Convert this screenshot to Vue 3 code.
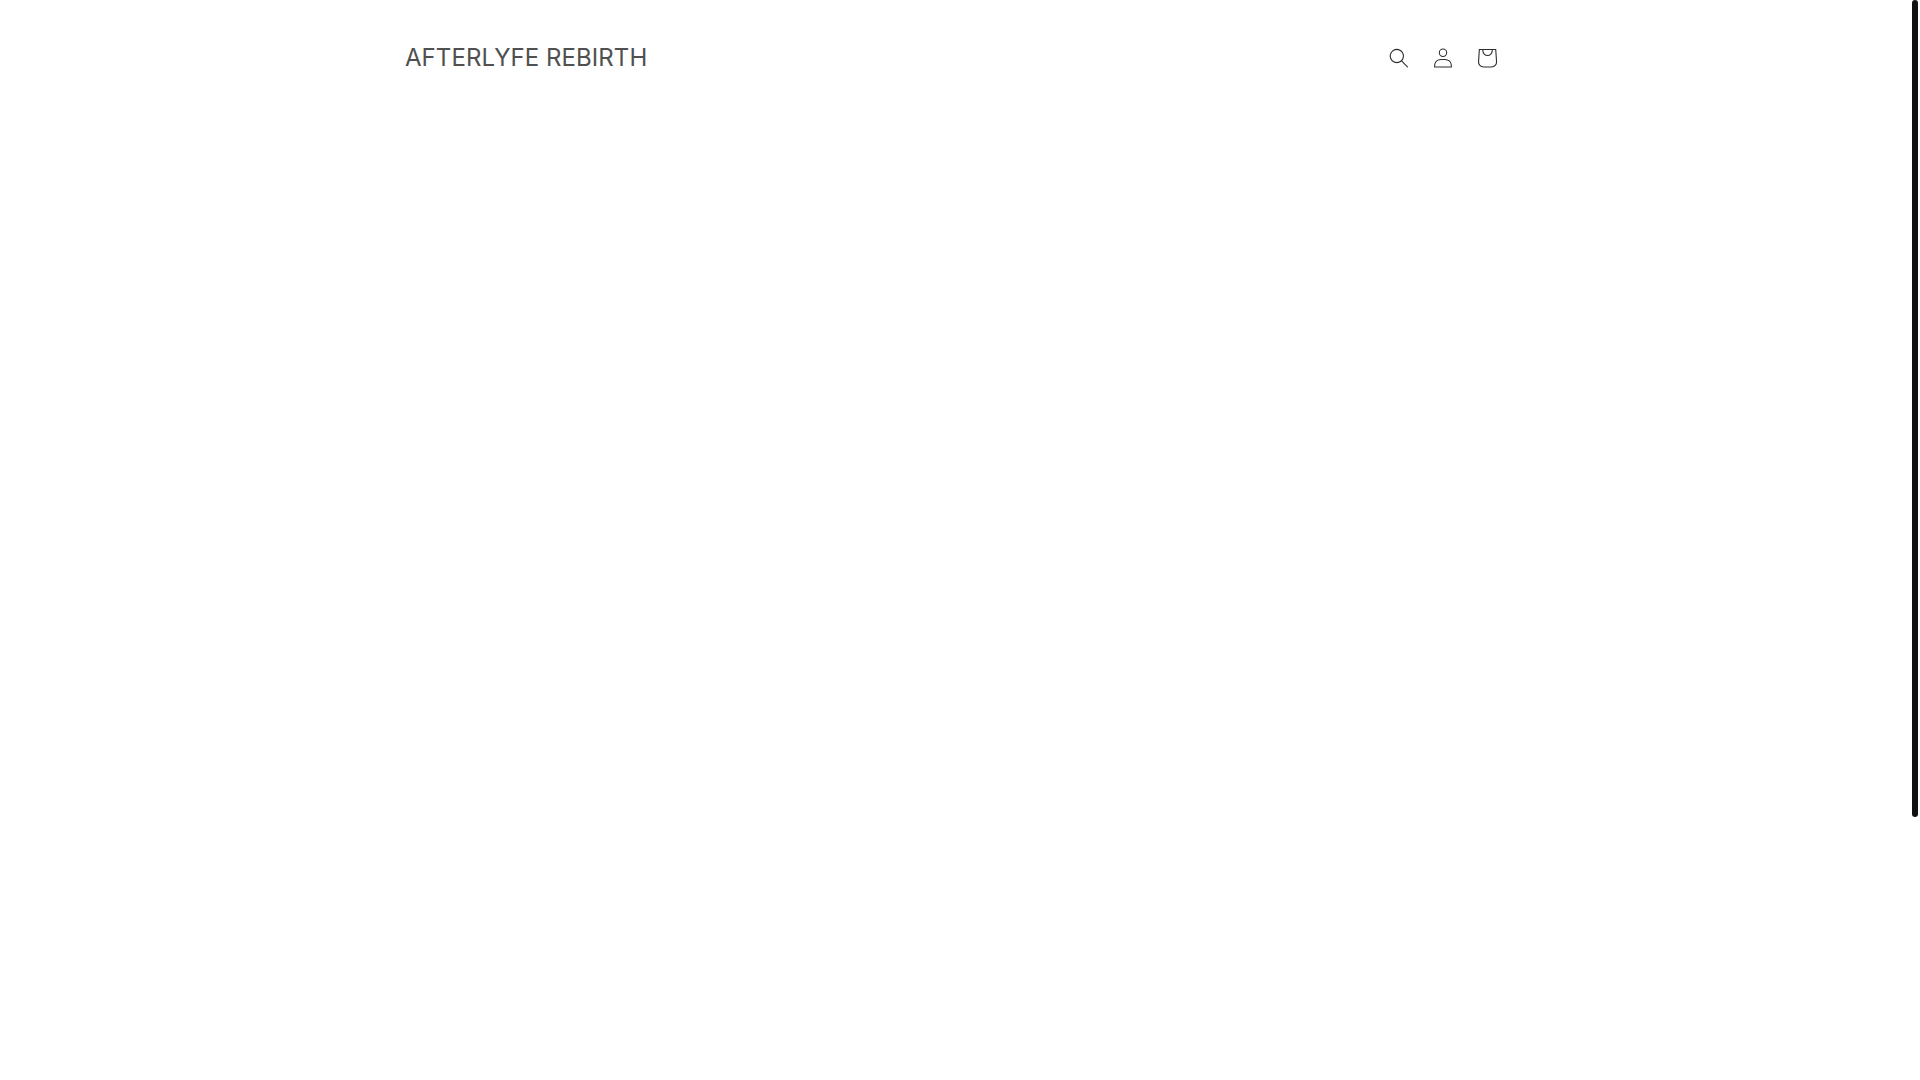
<template>
  <div class="page">
    <header class="header">
      <a class="logo" href="#">AFTERLYFE REBIRTH</a>
      <div class="icons">
        <button class="icon-btn" aria-label="Search">
          <svg class="icon" viewBox="0 0 18 19" fill="none">
            <path fill-rule="evenodd" clip-rule="evenodd" d="M11.03 11.68A5.784 5.784 0 112.85 3.5a5.784 5.784 0 018.18 8.18zm.26 1.12a6.78 6.78 0 11.72-.7l5.4 5.4a.5.5 0 11-.71.7l-5.41-5.4z" fill="currentColor" />
          </svg>
        </button>
        <button class="icon-btn" aria-label="Log in">
          <svg class="icon" viewBox="0 0 18 19" fill="none">
            <path fill-rule="evenodd" clip-rule="evenodd" d="M6 4.5a3 3 0 116 0 3 3 0 01-6 0zm3-4a4 4 0 100 8 4 4 0 000-8zm5.58 12.15c1.12.82 1.83 2.24 1.91 4.85H1.51c.08-2.6.79-4.03 1.9-4.85C4.66 11.75 6.5 11.5 9 11.5s4.35.26 5.58 1.15zM9 10.5c-2.5 0-4.65.24-6.17 1.35C1.27 12.98.5 14.93.5 18v.5h17V18c0-3.07-.77-5.02-2.33-6.15-1.52-1.1-3.67-1.35-6.17-1.35z" fill="currentColor" />
          </svg>
        </button>
        <button class="icon-btn" aria-label="Cart">
          <svg class="icon-cart" viewBox="0 0 40 40" fill="none">
            <path d="m15.75 11.8h-3.16l-.77 11.6a5 5 0 0 0 4.99 5.34h7.38a5 5 0 0 0 4.99-5.34l-.78-11.6zm0 1h-2.22l-.71 10.67a4 4 0 0 0 3.99 4.27h7.38a4 4 0 0 0 4-4.27l-.72-10.67h-2.22v.63a4.75 4.75 0 1 1 -9.5 0zm8.5 0h-7.5v.63a3.75 3.75 0 1 0 7.5 0z" fill="currentColor" fill-rule="evenodd" />
          </svg>
        </button>
      </div>
    </header>
    <div class="scroll-thumb"></div>
  </div>
</template>

<script setup>
</script>

<style>
html, body { background: #fff; }
</style>

<style scoped>
.page {
  min-height: 1080px;
  background: #fff;
  font-family: "Inter", "Noto Sans", sans-serif;
  color: #121212;
}
.header {
  width: 1200px;
  margin-left: 356px;
  box-sizing: border-box;
  padding: 36px 47px 0 49px;
  display: flex;
  align-items: center;
  justify-content: space-between;
}
.logo {
  font-size: 24px;
  line-height: 44px;
  letter-spacing: 0.06px;
  color: #505050;
  text-decoration: none;
}
.icons { display: flex; }
.icon-btn {
  width: 44px;
  height: 44px;
  padding: 0;
  border: 0;
  background: none;
  color: #2e2e2e;
  display: flex;
  align-items: center;
  justify-content: center;
}
.icon { width: 20px; height: 20px; }
.icon-cart { width: 44px; height: 44px; }
.scroll-thumb {
  position: fixed;
  top: 0;
  right: 2px;
  width: 6px;
  height: 817px;
  border-radius: 3px;
  background: #111;
}
</style>
